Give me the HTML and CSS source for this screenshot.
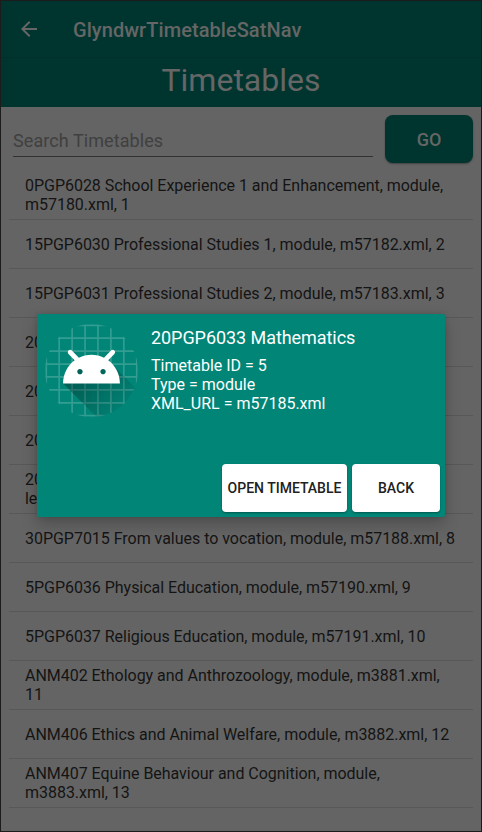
FILE: index.html
```html
<!DOCTYPE html>
<html lang="en">
<head>
<meta charset="utf-8">
<title>GlyndwrTimetableSatNav</title>
<link rel="stylesheet" href="styles.css">
</head>
<body>
<div class="screen">
  <header class="appbar">
    <svg class="back-arrow" viewBox="0 0 24 24"><path d="M20 11H7.83l5.59-5.59L12 4l-8 8 8 8 1.41-1.41L7.83 13H20v-2z"/></svg>
    <span class="app-name">GlyndwrTimetableSatNav</span>
  </header>
  <h1 class="heading"><span>Timetables</span></h1>
  <div class="search">
    <div class="search-field"><span>Search Timetables</span></div>
    <div class="go"><span>GO</span></div>
  </div>
  <ul class="list">
    <li><span>0PGP6028 School Experience 1 and Enhancement, module,<br>m57180.xml, 1</span></li>
    <li><span>15PGP6030 Professional Studies 1, module, m57182.xml, 2</span></li>
    <li><span>15PGP6031 Professional Studies 2, module, m57183.xml, 3</span></li>
    <li><span>20</span></li>
    <li><span>20</span></li>
    <li><span>20</span></li>
    <li><span>20<br>le</span></li>
    <li><span>30PGP7015 From values to vocation, module, m57188.xml, 8</span></li>
    <li><span>5PGP6036 Physical Education, module, m57190.xml, 9</span></li>
    <li><span>5PGP6037 Religious Education, module, m57191.xml, 10</span></li>
    <li><span>ANM402 Ethology and Anthrozoology, module, m3881.xml,<br>11</span></li>
    <li><span>ANM406 Ethics and Animal Welfare, module, m3882.xml, 12</span></li>
    <li><span>ANM407 Equine Behaviour and Cognition, module,<br>m3883.xml, 13</span></li>
  </ul>
</div>
<div class="dialog">
  <div class="info">
    <svg class="launcher" viewBox="18 18 72 72">
      <defs>
        <clipPath id="round"><circle cx="54" cy="54" r="36"/></clipPath>
        <linearGradient id="shade" gradientUnits="userSpaceOnUse" x1="48.77" y1="61.09" x2="78.59" y2="90.92"><stop offset="0" stop-opacity=".27"/><stop offset="1" stop-opacity="0"/></linearGradient>
      </defs>
      <g clip-path="url(#round)">
        <path class="grid" d="M19 0V108M29 0V108M39 0V108M49 0V108M59 0V108M69 0V108M79 0V108M89 0V108M0 19H108M0 29H108M0 39H108M0 49H108M0 59H108M0 69H108M0 79H108M0 89H108"/>
        <path fill="url(#shade)" d="M32,64C32,64 38.39,52.99 44.13,50.95C51.37,48.37 70.14,49.57 70.14,49.57L108.26,87.69L108,109.01L75.97,107.97L32,64Z"/>
        <path fill="#fff" d="M66.94,46.02C72.44,50.07 76,56.61 76,64L32,64C32,56.61 35.56,50.11 40.98,46.06L36.18,41.19C35.45,40.45 35.45,39.3 36.18,38.56C36.91,37.81 38.05,37.81 38.78,38.56L44.25,44.05C47.18,42.57 50.48,41.71 54,41.71C57.48,41.71 60.78,42.57 63.68,44.05L69.11,38.56C69.84,37.81 70.98,37.81 71.71,38.56C72.44,39.3 72.44,40.45 71.71,41.19L66.94,46.02ZM62.94,56.92C64.08,56.92 65,56.01 65,54.88C65,53.76 64.08,52.85 62.94,52.85C61.8,52.85 60.88,53.76 60.88,54.88C60.88,56.01 61.8,56.92 62.94,56.92ZM45.06,56.92C46.2,56.92 47.13,56.01 47.13,54.88C47.13,53.76 46.2,52.85 45.06,52.85C43.92,52.85 43,53.76 43,54.88C43,56.01 43.92,56.92 45.06,56.92Z"/>
      </g>
    </svg>
    <div class="details">
      <h2><span>20PGP6033 Mathematics</span></h2>
      <p><span>Timetable ID = 5</span></p>
      <p><span>Type = module</span></p>
      <p><span>XML_URL = m57185.xml</span></p>
    </div>
  </div>
  <div class="actions">
    <div class="btn open"><span>OPEN TIMETABLE</span></div>
    <div class="btn back"><span>BACK</span></div>
  </div>
</div>
</body>
</html>
```
FILE: styles.css
```css
* { box-sizing: border-box; }
body { margin: 0; font-family: Roboto, "Liberation Sans", sans-serif; font-size: 16px; line-height: 19px; }
h1, h2, p, ul { margin: 0; padding: 0; font-weight: 400; }
.screen { width: 482px; height: 832px; border: 1px solid #1c1c1c; background: #646464; overflow: hidden; }
.appbar { height: 57px; background: #00352f; border-bottom: 1px solid #00302a; display: flex; align-items: center; padding: 2px 0 0 16px; }
.back-arrow { width: 24px; height: 24px; margin-bottom: 2px; fill: #666; }
.app-name { margin-left: 32px; font-size: 20px; font-weight: 500; line-height: 24px; color: #666; letter-spacing: .06px; }
.heading { height: 49px; background: #00352f; text-align: center; font-size: 32px; line-height: 45px; color: #666; }
.search { height: 64px; display: flex; padding: 8px 8px 0 12px; gap: 12px; }
.search-field { width: 360px; height: 42px; border-bottom: 1px solid #323232; font-size: 18px; line-height: 52px; color: #404040; letter-spacing: .08px; }
.go { width: 88px; height: 48px; border-radius: 8px; background: #00352f; color: #666; font-size: 18px; font-weight: 500; line-height: 50px; text-align: center; box-shadow: 0 1px 2px rgba(0,0,0,.35); }
.list { list-style: none; margin: 0 8px; color: #141414; letter-spacing: -.03px; }
.list li { height: 49px; padding-left: 16px; border-bottom: 1px solid #585858; display: flex; align-items: center; white-space: nowrap; }
.dialog { position: absolute; left: 37px; top: 314px; width: 408px; height: 203px; border-radius: 2px; background: #008577; color: #fff; box-shadow: 0 7px 16px rgba(0,0,0,.22), 0 0 5px rgba(0,0,0,.12); display: flex; flex-direction: column; justify-content: space-between; padding: 10px 5px 5px 8px; }
.info { display: flex; gap: 13px; }
.launcher { width: 93px; height: 93px; flex: none; }
.grid { fill: none; stroke: #fff; stroke-opacity: .2; stroke-width: 1.3; }
.details { padding-top: 3px; white-space: nowrap; }
.details h2 { font-size: 18px; line-height: 22px; margin-bottom: 7px; letter-spacing: -.06px; }
.actions { display: flex; justify-content: flex-end; gap: 5px; }
.btn { height: 48px; border-radius: 4px; background: #fff; color: #212121; font-size: 14px; font-weight: 500; line-height: 49px; text-align: center; white-space: nowrap; box-shadow: 0 1px 2px rgba(0,0,0,.35); }
.open { width: 125px; }
.back { width: 88px; }
```
